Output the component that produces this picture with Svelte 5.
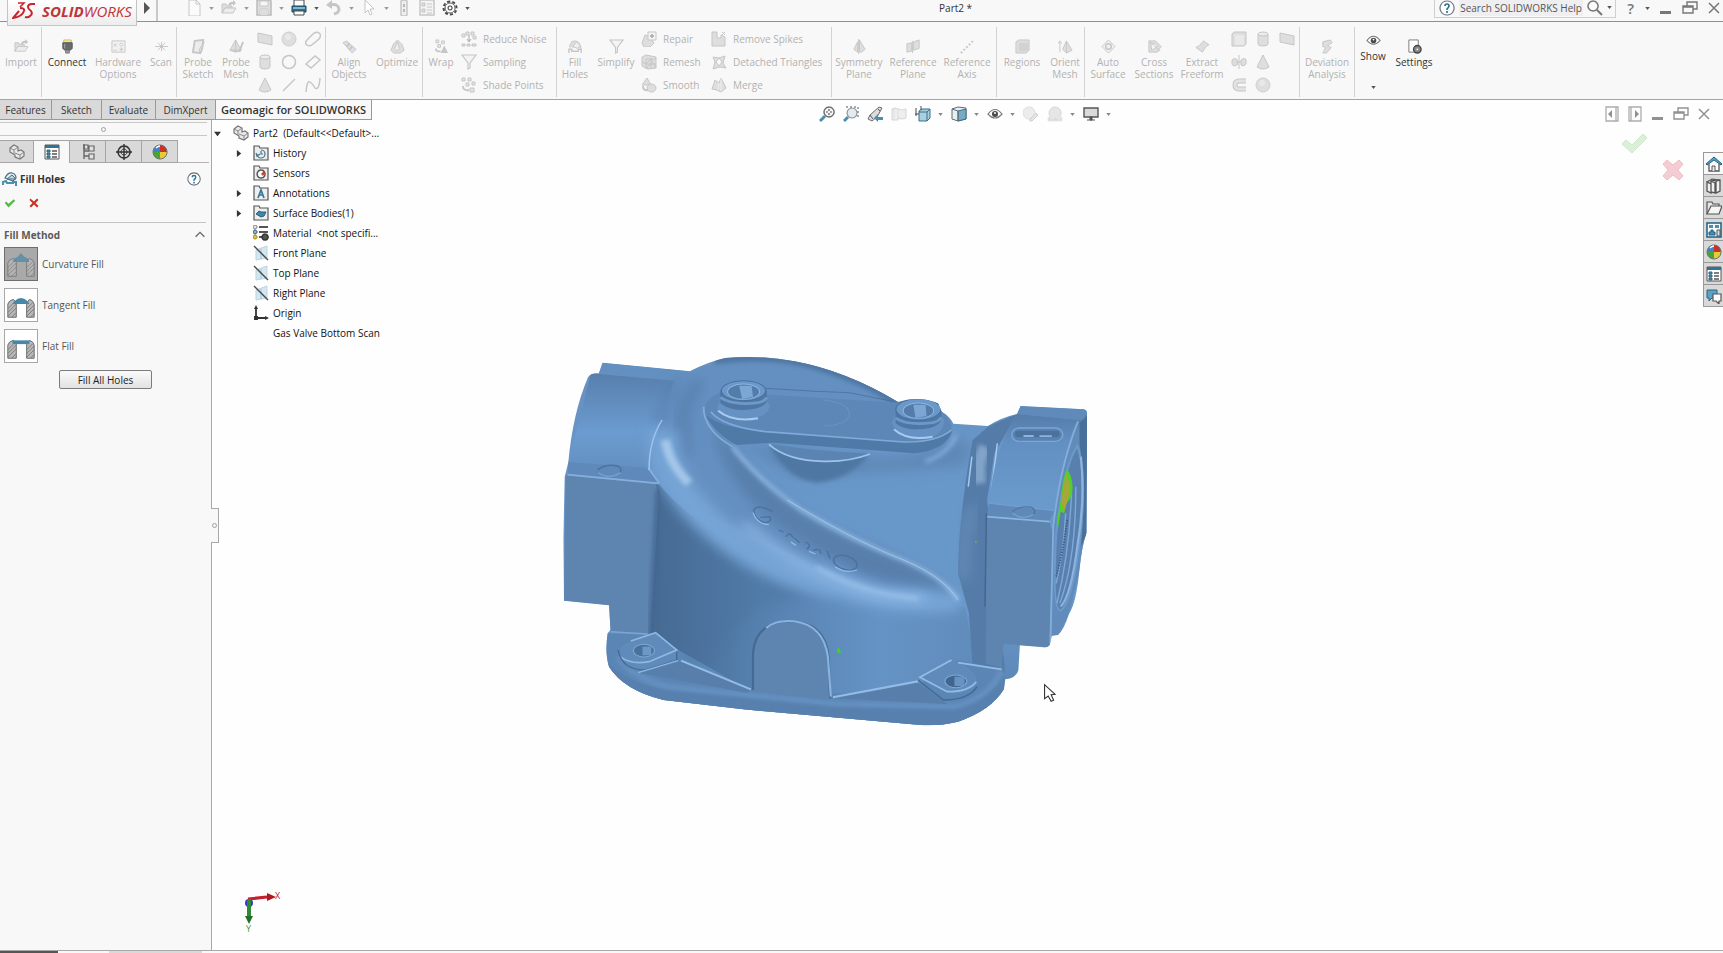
<script>
  // Each icon is a list of [path, fill, stroke, stroke width] on a 16x16 grid
  const G = '#dedede';
  const L = '#c6c6c6';
  const D = '#4a4a4a';
  const B = '#4b8fb0';

  const icons = {
    importFile: [['M1 13V4h4l1 2h5v2H4z', G, L], ['M1 13L4 8h11l-3 5z', '#ececec', L], ['M7 5q2-4 5-3l0-2 3 3-3 3V4q-2 0-3 2', L]],
    connect: [['M4 1h8v3H4z', '#f2e987', '#c9c06a'], ['M3 4h10v6l-2 2H5l-2-2z', '#6a6a6e', '#55555a'], ['M6 12h4v3H6z', '#9a9a9a', '#777'], ['M5 5v5', 'none', '#aaa']],
    hardware: [['M1 2h14v12H1z', '#f1f1f1', L], ['M3 5l3 3M6 5L3 8M11 4l2 2-2 2-2-2zM3 12h3M11 9v4M9 11h4', 'none', L]],
    scan: [['M1 8h14M8 3v10M4 4l8 8M12 4l-8 8', 'none', L], ['M6 8a2 2 0 1 0 4 0a2 2 0 1 0-4 0', L]],
    probeSketch: [['M4 2l9-1-1 9-2 5-8-1z', '#ececec', L, 2], ['M14 3l-3 9-2 3v-4z', G, L]],
    probeMesh: [['M7 1l6 11H1z', G, L], ['M7 1v11M1 12l6 2 6-2', L, L], ['M15 3l-3 8-1 3', 'none', L, 2]],
    plane: [['M1 2l14 3v9L1 11z', G, L]],
    ball: [['M1 8a7 7 0 1 0 14 0a7 7 0 1 0-14 0', G, '#cfcfcf'], ['M4 6a3 3 0 1 0 6 0a3 3 0 1 0-6 0', '#e9e9e9']],
    slot: [['M2 9l6-6q3-3 6-1t0 6l-6 5q-3 3-6 1t0-5z', 'none', L, 1.5]],
    cylinder: [['M3 3v10q0 2 5 2t5-2V3', G, L], ['M3 3q0-2 5-2t5 2q0 2-5 2T3 3z', '#ededed', L]],
    ring: [['M1.500 8a6.500 6.500 0 1 0 13 0a6.500 6.500 0 1 0-13 0', 'none', L, 1.5]],
    rect: [['M1 10l9-8 5 4-9 8z', 'none', L, 1.5]],
    cone: [['M8 1l6 12q-6 4-12 0z', G, L]],
    line: [['M2 14L14 2', 'none', L, 1.5]],
    spline: [['M1 15Q2 3 5 5t5 6q4 3 5-10', 'none', L, 1.5]],
    align: [['M1 4l4-2 10 9-4 4z', G, L], ['M5 8l3-3M8 11l3-3', 'none', L, 2]],
    optimize: [['M8 1l5 5 2 6-4 3H4l-3-3 3-7z', G, L], ['M8 3l2 7-2 3-3-3z', '#efefef', L]],
    wrap: [['M2 1h3v3H2zM8 2h3v3H8zM4 6h3v3H4z', '#e8e8e8', L], ['M11 7l4 8H7z', L], ['M2 10q0 4 5 3', 'none', L, 2]],
    noise: [['M1 3h3v3H1zM5 1h3v3H5zM10 1h3v3h-3zM12 5h3v3h-3z', '#e4e4e4', L], ['M8 4v6M6 8l2 3 2-3', 'none', '#aaa'], ['M1 13h3v2H1zM6 13h3v2H6zM11 13h4v2h-4z', G, L]],
    funnel: [['M1 1h14L9 9v5l-2 1V9z', '#f4f4f4', L, 1.2]],
    shade: [['M1 1h3v3H1zM7 1h3v3H7zM11 5h3v3h-3zM5 6h3v3H5zM9 11h4v4H9z', '#e4e4e4', L], ['M2 9q0 5 6 4', 'none', L, 2]],
    fillHoles: [['M2 9q-1-3 1-4 0-3 4-3 5 0 6 5l1 3', G, L], ['M5 8l4-5 4 4-3 3z', '#efefef', L], ['M1 15v-4h3v2h7v-2h3v4', 'none', L, 1.5]],
    repair: [['M1 12l3-8 5 2 4 6-4 4H3z', G, L], ['M7 1h8v8H7z', '#f4f4f4', L], ['M11 3v4M9 5h4', 'none', '#aaa', 1.5]],
    remesh: [['M1 3l4-2 10 2v11l-8 1-6-3z', G, L], ['M5 5h10M5 5v10M5 10h10M10 4v11M5 10l5-5 5 9M5 15l5-6M1 8l4 2', 'none', L]],
    smooth: [['M6 1l4 7H1z', G, L], ['M6 11a4.500 4 0 1 0 9 0a4.500 4 0 1 0-9 0', G, L], ['M2 9q0 5 5 4', 'none', L, 2]],
    spikes: [['M1 1h5v6h4V4l4 2v9H1z', G, L], ['M11 1l3 3M14 1l-3 3', 'none', L]],
    detached: [['M2 3l6 1 6-2-2 7 3 5-6-1-7 2 2-7z', G, L], ['M5 8l3-4 3 4-3 4z', '#fafafa', L]],
    merge: [['M4 3l4 3 2-5 5 10-5 4-4-2-5-1z', G, L], ['M8 6l-1 7M10 1v13', 'none', '#efefef']],
    symmetry: [['M8 1l6 10-4 3H8zM6 3v11l-4-3z', G, L], ['M7 0v16', 'none', L]],
    refPlane: [['M1 5l5-1v9l-5 1zM8 3l6-2v9l-6 2z', G, L], ['M7 2v13', 'none', L]],
    refAxis: [['M1 15L15 1', 'none', L, 2, '2 2']],
    regions: [['M1 3l3-2h11v11l-3 3H1z', G, L], ['M4 4h10v9H4z', '#d2d2d2']],
    orient: [['M9 2l6 10-6 3-4-4z', G, L], ['M2 14V3M0 5l2-3 2 3M9 3v12', 'none', L]],
    autoSurface: [['M8 1l7 7-7 7-7-7z', '#f0f0f0', L], ['M5 8a3 3 0 1 0 6 0a3 3 0 1 0-6 0', 'none', L, 1.5]],
    crossSections: [['M2 2h7l6 6-4 6H2z', G, L], ['M4 5h5l2 3-6 4z', '#f7f7f7', L], ['M2 2l12 11', 'none', L]],
    freeform: [['M1 9q4-1 8-7l6 4q-4 1-7 8z', G, L]],
    box: [['M1 3l2-2h12v12l-2 2H1z', G, L], ['M4 4h9v10H4z', '#e9e9e9']],
    revolve: [['M1 6q4-3 5 0 2 2 0 5-4 2-5-1zM10 6q4-3 5 0v4q-2 3-5 1z', G, L], ['M8 1v14M5 8h6', 'none', L]],
    sweep: [['M15 4H8Q4 4 4 8t4 4h7', 'none', L, 5], ['M15 4H8Q4 4 4 8t4 4h7', 'none', '#e2e2e2', 3]],
    deviation: [['M3 3l8-2 2 3-5 3 4 2-5 6H3l3-6-3-1z', G, L]],
    eye: [['M1 8q7-9 14 0-7 8-14 0z', '#fff', '#777', 1.2], ['M5 8a3 3 0 1 0 6 0a3 3 0 1 0-6 0', D], ['M7 7a1 1 0 1 0 2 0a1 1 0 1 0-2 0', '#fff']],
    settings: [['M2 1h10v13H2z', '#fff', '#777'], ['M7 11a4 4 0 1 0 8 0a4 4 0 1 0-8 0', '#8a8a8a', '#444', 1.5], ['M10 11a1 1 0 1 0 2 0a1 1 0 1 0-2 0', '#fff']],
    newFile: [['M3 0h7l4 4v12H3z', '#fbfbfb', L], ['M10 0v4h4', 'none', L]],
    save: [['M1 0h13l1 1v14H1z', G, '#bbb', 1.5], ['M4 1h8v5H4zM4 9h8v6H4z', '#f6f6f6', L], ['M5 11h6M5 13h6', 'none', L]],
    print: [['M3 6V0h10v6', '#fff', D], ['M1 6h14v6H1z', '#2f6f8c', '#1d4a60'], ['M2 8h12', 'none', '#9fd0e6', 1.5], ['M3 11h10v4H3z', '#fff', D]],
    undo: [['M4 5q8-2 9 4 0 4-5 5', 'none', L, 3], ['M0 5l6-5v9z', L]],
    pointer: [['M4 0v13l3-3 2 5 2-1-2-5h4z', '#fff', L]],
    light: [['M5 1q3-2 6 0v14q-3 2-6 0z', '#eee', L, 1.5], ['M7 4h2v3H7zM7 9h2v3H7z', '#bbb']],
    list: [['M1 0h14v15H1z', '#f4f4f4', L, 1.5], ['M3 3h3v3H3zM3 9h3v3H3z', G, L], ['M8 4h5M8 7h5M8 10h5M8 13h5', 'none', L]],
    gear: [['M8 1.500a6.500 6.500 0 1 0 .1 0', '#fff', D, 2, '3 2'], ['M8 3a5 5 0 1 0 .1 0', '#fff', D, 1], ['M8 6a2 2 0 1 0 .1 0', '#fff', D, 1.2]],
    help: [['M8 1a7 7 0 1 0 .1 0', '#fff', '#6a7780', 1.2], ['M6 6q0-2 2-2t2 2q0 1-2 3v1M8 11v2', 'none', '#2f7396', 1.7]],
    search: [['M6 1a5 5 0 1 0 .1 0', '#fbfbfb', '#777', 1.5], ['M10 10l5 5', 'none', '#777', 2]],
    min: [['M2 11h11v3H2z', '#777']],
    restore: [['M5 6V2h10v7h-4', 'none', '#777', 1.4], ['M1 6h10v7H1zM1 7h10', 'none', '#777', 1.4]],
    close: [['M3 3l10 10M13 3L3 13', 'none', '#777', 1.5]],
    dockLeft: [['M2 1h12v14H2zM12 1v14', 'none', '#999', 1.3], ['M4 8l4-4v8z', '#777']],
    dockRight: [['M2 1h12v14H2zM4 1v14', 'none', '#999', 1.3], ['M12 8L8 4v8z', '#777']],
    zoomFit: [['M6 10l-5 5', 'none', B, 3], ['M10 1a5 5 0 1 0 .1 0', '#f4f6f8', '#6b6b6b', 1.4], ['M10 3v6M7 6h6', 'none', '#555', 1.2, '2 2']],
    zoomArea: [['M5 11l-4 4', 'none', B, 3], ['M3 1h12v11', 'none', '#555', 1, '2 2'], ['M9 2a5 5 0 1 0 .1 0', '#e4ebf0', '#8b9298', 1.2]],
    prevView: [['M1 13l2-4 9-8 3 1-5 9-5 4z', '#dcdcdc', '#6b6b6b'], ['M3 9l3 4M11 3l2 2', 'none', '#555'], ['M7 12l4-4v3h5v3h-5v2z', B]],
    section: [['M1 3q3-2 6 0t8 0v9q-5 2-8 0v2H1z', '#eee', '#d5d5d5'], ['M7 3v10M3 3v9', 'none', '#ddd']],
    viewOrient: [['M4 5l3-2h8v9l-3 3H4z', '#a9cfe2', '#3d6f88'], ['M4 6h8v9M12 6l3-3', 'none', '#3d6f88'], ['M1 2v8M6 0v4M0 8h4', 'none', D]],
    display: [['M1 3l6-2 8 1v11l-8 2-6-2z', '#e9eef0', '#5f6c73'], ['M7 5l8-2v10l-8 2z', '#76aac5', '#3d6f88'], ['M1 3l6 2v10', 'none', '#5f6c73']],
    appear: [['M6 1a6 6 0 1 0 .1 0', '#ececec', '#ddd'], ['M13 7l2 2-6 6H7v-2z', '#e4e4e4', '#cfcfcf']],
    sceneIcon: [['M8 1a6 6 0 1 0 .1 0', '#e6e6e6', '#d6d6d6'], ['M1 11h3v2h3v-2h3v2h3v-2h2v4H1z', '#dadada', '#e8e8e8']],
    monitor: [['M1 2h14v9H1z', '#d8dadd', '#555', 1.4], ['M7 11h2v3H7zM4 14h8', '#555', '#555']],
    part: [['M1 4l4-3 4 2v4l3-1 3 2v4l-4 3-5-2v-2l-5-3z', '#e8e8e8', '#777', 1.2], ['M1 4l4 2 4-3M5 6v5M6 9l5 2 4-3M11 11v4', 'none', '#888']],
    props: [['M1 1h14v14H1z', '#fff', '#555'], ['M1 1h14v3H1z', '#2f7396'], ['M3 6h3v2H3zM3 9h3v2H3zM3 12h3v2H3z', B, '#35647c'], ['M8 7h5M8 10h5M8 13h5', 'none', '#555', 1.3]],
    config: [['M4 1h4v4H4zM9 2h5v5H9zM9 10h5v5H9z', '#e1e1e1', '#666', 1.2], ['M4 0v15M4 12h5M4 7h5', 'none', '#666', 1.4]],
    target: [['M8 2a6 6 0 1 0 .1 0', 'none', '#333', 1.4], ['M8 5a3 3 0 1 0 .1 0', 'none', '#333'], ['M8 0v16M0 8h16', 'none', '#333', 1.4]],
    beach: [['M8 8L8 1A7 7 0 0 0 1 8z', '#4282c9'], ['M8 8V1a7 7 0 0 1 7 7z', '#c93226'], ['M8 8H1a7 7 0 0 0 7 7z', '#46a636'], ['M8 8v7a7 7 0 0 0 7-7z', '#e6cb36'], ['M8 1a7 7 0 1 0 .1 0', 'none', '#6d6d6d'], ['M4 4q2-2 4-2', 'none', '#fff', 1.5]],
    fillTitle: [['M3 7q3-6 7-5 4 1 4 5l-3 3z', '#e3edf2', '#4c6f82', 1.2], ['M5 8l5-4 4 4z', '#b9d5e2', '#4c6f82'], ['M1 14v-3l3-1 1 2h6v-1h3v4', 'none', B, 2]],
    check: [['M1 8l2-2 3 3 7-6 2 2-9 9z', '#57b947']],
    cross: [['M3 2l5 4 4-4 2 2-4 4 4 4-2 2-4-4-4 4-2-2 4-4-4-4z', '#cf2f1f']],
    chevron: [['M3 10l5-5 5 5', 'none', '#666', 1.5]],
    history: [['M1 3V1h5l1 2h8v12H1z', '#e9edef', '#555', 1.2], ['M8 5a4 4 0 1 1-4 4', 'none', '#47748c', 1.2], ['M8 6v3h2M3 8l1 3 3-2', 'none', '#47748c', 1.2]],
    sensors: [['M1 3V1h5l1 2h8v12H1z', '#eee', '#555', 1.2], ['M8 5a4 4 0 1 0 .1 0', '#fff', '#555', 1.5], ['M8 9l3-3 1 2-2 3z', '#d63d24']],
    annotations: [['M1 3V1h5l1 2h8v12H1z', '#eee', '#555', 1.2], ['M5 13l3-8 3 8M6 10h4', 'none', '#34789a', 1.7]],
    surface: [['M1 3V1h5l1 2h8v12H1z', '#eee', '#555', 1.2], ['M3 9l3-3 2 1 5 0-2 4-3 1z', '#3f86a8', '#2a5f7a']],
    material: [['M6 2h9M6 7h9M6 12h9', 'none', '#555', 2], ['M2 0a2 2 0 1 0 .1 0', '#e5e5e5', '#777'], ['M2 5a2 2 0 1 0 .1 0', '#7fb8d4', '#457'], ['M2 10a2 2 0 1 0 .1 0', '#efc02c', '#a8861a'], ['M12 9a3 3 0 1 0 .1 0', '#555', '#333', 1.5]],
    planeItem: [['M3 5l11-4v12L3 15z', '#d3e7f0', '#bcd5e0'], ['M8 4v10', 'none', '#a4c6d6'], ['M1 1l14 14', 'none', D, 1.4]],
    origin: [['M3 2v11h11', 'none', '#333', 1.8], ['M3 0l2 4H1zM16 13l-4-2v4z', '#333'], ['M1 11h4v4H1z', '#333']],
    home: [['M3 8v7h10V8', '#fff', '#555', 1.3], ['M6 15v-5h3v5', '#eee', '#555'], ['M0 8l8-7 8 7-1 1-7-5-7 5z', '#5aa3c4', '#1f5f80']],
    library: [['M1 4l4 2v9l-4-2zM5 3l4 2v10l-4-1zM10 3l4-1v11l-4 2z', '#f1f1f1', '#555', 1.3], ['M1 4l5-3 8 1M5 3l4-1M10 3l-3-1', 'none', '#555', 1.2]],
    folder: [['M1 14V2h5l1 2h6v3', '#e5e5e5', '#555', 1.2], ['M1 14l4-8h11l-3 8z', '#f5f5f5', '#555', 1.2]],
    palette: [['M1 1h14v14H1z', '#f4f8fa', '#1f5f80', 1.5], ['M3 3h4v3H3zM9 3h4v3H9z', B], ['M3 13v-3h2V8h2v2h2v3z', B, '#1f5f80'], ['M11 8h3v6h-3z', '#ddd', '#555']],
    chat: [['M1 2h10v8H6l-3 3v-3H1z', '#5aa3c4', '#2b6480'], ['M7 6h8v7h-2v3l-3-3H7z', '#fff', '#555', 1.2]]
  };

  const quickAccess = [
    { icon: 'newFile', label: 'New', off: true, caret: true },
    { icon: 'importFile', label: 'Open', off: true, caret: true },
    { icon: 'save', label: 'Save', off: true, caret: true },
    { icon: 'print', label: 'Print', caret: true },
    { icon: 'undo', label: 'Undo', off: true, caret: true },
    { icon: 'pointer', label: 'Select', off: true, caret: true },
    { icon: 'light', label: 'Rebuild', off: true },
    { icon: 'list', label: 'File properties', off: true },
    { icon: 'gear', label: 'Options', caret: true }
  ];

  const ribbon = [
    { name: 'import', items: [{ size: 'w42', icon: 'importFile', text: 'Import' }] },
    {
      name: 'capture',
      items: [
        { size: 'w50', icon: 'connect', text: 'Connect', on: true },
        { size: 'w52', icon: 'hardware', text: 'Hardware Options' },
        { size: 'w34', icon: 'scan', text: 'Scan' }
      ]
    },
    {
      name: 'probe',
      items: [
        { size: 'w42', icon: 'probeSketch', text: 'Probe Sketch' },
        { size: 'w34', icon: 'probeMesh', text: 'Probe Mesh' },
        { grid: ['plane', 'ball', 'slot', 'cylinder', 'ring', 'rect', 'cone', 'line', 'spline'] }
      ]
    },
    {
      name: 'align',
      items: [
        { size: 'w46', icon: 'align', text: 'Align Objects' },
        { size: 'w50', icon: 'optimize', text: 'Optimize' }
      ]
    },
    {
      name: 'points',
      items: [
        { size: 'w36', icon: 'wrap', text: 'Wrap' },
        { wide: true, list: [['noise', 'Reduce Noise'], ['funnel', 'Sampling'], ['shade', 'Shade Points']] }
      ]
    },
    {
      name: 'mesh',
      items: [
        { size: 'w36', icon: 'fillHoles', text: 'Fill Holes' },
        { size: 'w46', icon: 'funnel', text: 'Simplify' },
        { list: [['repair', 'Repair'], ['remesh', 'Remesh'], ['smooth', 'Smooth']] },
        { wider: true, list: [['spikes', 'Remove Spikes'], ['detached', 'Detached Triangles'], ['merge', 'Merge']] }
      ]
    },
    {
      name: 'reference',
      items: [
        { size: 'w54', icon: 'symmetry', text: 'Symmetry Plane' },
        { size: 'w54', icon: 'refPlane', text: 'Reference Plane' },
        { size: 'w54', icon: 'refAxis', text: 'Reference Axis' }
      ]
    },
    {
      name: 'regions',
      items: [
        { size: 'w50', icon: 'regions', text: 'Regions' },
        { size: 'w36', icon: 'orient', text: 'Orient Mesh' }
      ]
    },
    {
      name: 'surface',
      items: [
        { size: 'w46', icon: 'autoSurface', text: 'Auto Surface' },
        { size: 'w46', icon: 'crossSections', text: 'Cross Sections' },
        { size: 'w50', icon: 'freeform', text: 'Extract Freeform' },
        { grid: ['box', 'cylinder', 'plane', 'revolve', 'cone', null, 'sweep', 'ball'] }
      ]
    },
    { name: 'deviation', items: [{ size: 'w54', icon: 'deviation', text: 'Deviation Analysis' }] },
    {
      name: 'view',
      items: [
        { size: 'w36', icon: 'eye', text: 'Show', on: true, menu: true },
        { size: 'w46', icon: 'settings', text: 'Settings', on: true }
      ]
    }
  ];

  const tabs = ['Features', 'Sketch', 'Evaluate', 'DimXpert', 'Geomagic for SOLIDWORKS'];
  let activeTab = $state('Geomagic for SOLIDWORKS');

  const viewTools = [
    { icon: 'zoomFit', label: 'Zoom to fit' },
    { icon: 'zoomArea', label: 'Zoom to area' },
    { icon: 'prevView', label: 'Previous view' },
    { icon: 'section', label: 'Section view' },
    { icon: 'viewOrient', label: 'View orientation', caret: true },
    { icon: 'display', label: 'Display style', caret: true },
    { icon: 'eye', label: 'Hide/show items', caret: true },
    { icon: 'appear', label: 'Edit appearance' },
    { icon: 'sceneIcon', label: 'Apply scene', caret: true },
    { icon: 'monitor', label: 'View settings', caret: true }
  ];

  const panelTabs = ['part', 'props', 'config', 'target', 'beach'];
  const fillMethods = [
    { id: 'curvature', label: 'Curvature Fill', cap: 'M8 15l2-4q4-1 7-6 3 5 7 6l2 4z' },
    { id: 'tangent', label: 'Tangent Fill', cap: 'M8 16l2-3q7-7 14 0l2 3z' },
    { id: 'flat', label: 'Flat Fill', cap: 'M8 11h18v4H8z' }
  ];
  let method = $state('curvature');

  const tree = [
    { icon: 'history', text: 'History', open: true },
    { icon: 'sensors', text: 'Sensors' },
    { icon: 'annotations', text: 'Annotations', open: true },
    { icon: 'surface', text: 'Surface Bodies(1)', open: true },
    { icon: 'material', text: 'Material\u00a0 <not specifi...' },
    { icon: 'planeItem', text: 'Front Plane' },
    { icon: 'planeItem', text: 'Top Plane' },
    { icon: 'planeItem', text: 'Right Plane' },
    { icon: 'origin', text: 'Origin' },
    { icon: null, text: 'Gas Valve Bottom Scan' }
  ];

  const taskPane = ['home', 'library', 'folder', 'palette', 'beach', 'props', 'chat'];
</script>

{#snippet icon(name)}
  <svg class="icon" viewBox="0 0 16 16" aria-hidden="true">
    {#each icons[name] as [d, fill, stroke, width, dash]}
      <path {d} {fill} stroke={stroke ?? 'none'} stroke-width={width ?? 1} stroke-dasharray={dash} />
    {/each}
  </svg>
{/snippet}

{#snippet caret()}
  <svg class="caret" viewBox="0 0 6 4" aria-hidden="true"><path d="M0 0h6L3 4z" fill="currentColor" /></svg>
{/snippet}

<div class="app">
  <header class="titlebar">
    <div class="logo">
      <svg class="ds" viewBox="0 0 24 18" aria-hidden="true">
        <path d="M6 1h6L8 5" fill="none" stroke="#c8242b" stroke-width="1.5" />
        <path d="M8 6q5 0 4 3-2 6-11 7l6-7M23 2h-3q-4 0-4 3 0 2 3 4 2 3-1 5-2 2-5 1" fill="none" stroke="#c8242b" stroke-width="2" />
      </svg>
      <span class="brand"><b>SOLID</b>WORKS</span>
    </div>
    <button class="logo-arrow" aria-label="Open menu">
      <svg viewBox="0 0 8 12"><path d="M1 0l6 6-6 6z" fill="#555" /></svg>
    </button>
    <div class="quick">
      {#each quickAccess as item}
        <button class="quick-btn" class:off={item.off} aria-label={item.label}>
          {@render icon(item.icon)}
          {#if item.caret}{@render caret()}{/if}
        </button>
      {/each}
    </div>
    <h1>Part2 *</h1>
    <div class="search">
      {@render icon('help')}
      <input type="text" aria-label="Search help" placeholder="Search SOLIDWORKS Help" />
      {@render icon('search')}
      {@render caret()}
    </div>
    <div class="window-btns">
      <button class="question">? {@render caret()}</button>
      <button aria-label="Minimize">{@render icon('min')}</button>
      <button aria-label="Restore">{@render icon('restore')}</button>
      <button aria-label="Close">{@render icon('close')}</button>
    </div>
  </header>

  <div class="ribbon">
    {#each ribbon as group}
      <div class="group {group.name}">
        {#each group.items as item}
          {#if item.grid}
            <div class="icon-grid">
              {#each item.grid as name}
                {#if name}
                  <button aria-label={name} disabled>{@render icon(name)}</button>
                {:else}
                  <span></span>
                {/if}
              {/each}
            </div>
          {:else if item.list}
            <div class="list" class:wide={item.wide} class:wider={item.wider}>
              {#each item.list as [name, text]}
                <button disabled>{@render icon(name)}{text}</button>
              {/each}
            </div>
          {:else}
            <button class="tool {item.size}" class:menu={item.menu} disabled={!item.on}>
              {@render icon(item.icon)}
              <span>{item.text}</span>
              {#if item.menu}{@render caret()}{/if}
            </button>
          {/if}
        {/each}
      </div>
    {/each}
  </div>

  <div class="tab-row">
    <nav class="tabs">
      {#each tabs as tab}
        <button class:active={tab === activeTab} onclick={() => (activeTab = tab)}>{tab}</button>
      {/each}
    </nav>
    <div class="view-tools">
      {#each viewTools as tool}
        <button aria-label={tool.label}>
          {@render icon(tool.icon)}
          {#if tool.caret}{@render caret()}{/if}
        </button>
      {/each}
    </div>
    <div class="doc-btns">
      {#each ['dockLeft', 'dockRight', 'min', 'restore', 'close'] as name}
        <button aria-label={name}>{@render icon(name)}</button>
      {/each}
    </div>
  </div>

  <main>
    <aside class="panel">
      <div class="grip"><i></i></div>
      <div class="panel-tabs">
        {#each panelTabs as name}
          <button class:active={name === 'props'} aria-label={name}>{@render icon(name)}</button>
        {/each}
      </div>
      <div class="panel-title">
        {@render icon('fillTitle')}
        <h2>Fill Holes</h2>
        <button aria-label="Help">{@render icon('help')}</button>
      </div>
      <div class="confirm">
        <button aria-label="OK">{@render icon('check')}</button>
        <button aria-label="Cancel">{@render icon('cross')}</button>
      </div>
      <section class="fill">
        <h3>Fill Method {@render icon('chevron')}</h3>
        {#each fillMethods as m}
          <label class="method">
            <input type="radio" name="fill" value={m.id} bind:group={method} />
            <svg class="thumb" viewBox="0 0 34 34" aria-hidden="true">
              <path d="M3 30V16q1-4 6-5l3 4v15zM23 30V15l3-4q4 1 5 5v14z" fill="#b9b9b9" stroke="#666" />
              <path d="M3 21l6-6M3 25l9-9M3 29l9-9M7 30l5-5M23 21l6-6M23 25l8-8M23 29l8-8M27 30l4-4" stroke="#777" />
              <path d={m.cap} fill="#4788a8" />
            </svg>
            {m.label}
          </label>
        {/each}
        <button class="fill-all">Fill All Holes</button>
      </section>
    </aside>

    <div class="viewport">
      <button class="splitter" aria-label="Collapse panel"><i></i></button>

      <ul class="tree">
        <li class="root">
          <svg class="twist" viewBox="0 0 8 8"><path d="M0 2h8L4 7z" fill="#333" /></svg>
          {@render icon('part')}
          <span>Part2&nbsp; (Default&lt;&lt;Default&gt;...</span>
        </li>
        {#each tree as node}
          <li>
            <svg class="twist" viewBox="0 0 8 8">
              {#if node.open}<path d="M1 0l5 4-5 4z" fill="#333" />{/if}
            </svg>
            {#if node.icon}{@render icon(node.icon)}{:else}<span class="blank"></span>{/if}
            <span>{node.text}</span>
          </li>
        {/each}
      </ul>

      <svg class="model" viewBox="0 0 1568 1200" preserveAspectRatio="none" role="img" aria-label="Gas valve scan">
        <defs>
          <filter id="s6" x="-30%" y="-30%" width="160%" height="160%"><feGaussianBlur stdDeviation="6" /></filter>
          <filter id="s16" x="-50%" y="-50%" width="200%" height="200%"><feGaussianBlur stdDeviation="18" /></filter>
          <filter id="s2"><feGaussianBlur stdDeviation="2" /></filter>
          <linearGradient id="body" x1="0" y1="0" x2="0" y2="1">
            <stop offset="0" stop-color="#6690bf" />
            <stop offset="0.4" stop-color="#6998cb" />
            <stop offset="0.7" stop-color="#6796c8" />
            <stop offset="1" stop-color="#527aa6" />
          </linearGradient>
          <linearGradient id="pipe" x1="0" y1="0" x2="0" y2="1">
            <stop offset="0" stop-color="#587fac" />
            <stop offset="0.6" stop-color="#6b9bd0" />
            <stop offset="1" stop-color="#6490c0" />
          </linearGradient>
          <linearGradient id="collar" x1="0" y1="0" x2="0" y2="1">
            <stop offset="0" stop-color="#557caa" />
            <stop offset="0.3" stop-color="#6390c2" />
            <stop offset="1" stop-color="#6b9bce" />
          </linearGradient>
          <linearGradient id="belly" x1="0" y1="0" x2="1" y2="0">
            <stop offset="0" stop-color="#45688f" />
            <stop offset="0.3" stop-color="#547eac" />
            <stop offset="0.7" stop-color="#6593c5" />
            <stop offset="1" stop-color="#608cbb" />
          </linearGradient>
          <clipPath id="outline">
            <path d="M172 68L412 94Q460 66 510 54Q600 44 700 64Q840 92 985 186Q1040 166 1095 190L1105 215Q1130 232 1137 251L1232 258Q1270 232 1312 222L1322 198L1495 208Q1505 210 1505 222L1503 580Q1490 620 1484 690Q1475 790 1455 822Q1442 868 1425 885L1408 887L1402 915Q1396 924 1385 922L1320 916L1316 990Q1310 1015 1280 1018L1276 1048Q1240 1112 1150 1145Q1090 1160 1040 1154L560 1108L340 1080Q230 1050 190 980Q178 940 186 880L194 870L190 796L66 782L64 600L68 410L78 366Q90 220 132 112Q140 98 162 100z" />
          </clipPath>
        </defs>
        <g clip-path="url(#outline)">
          <path d="M0 0H1568V1200H0z" fill="url(#body)" />
          <path d="M172 68L412 94L370 122L162 100z" fill="#6390c0" />
          <path d="M140 100L370 122L345 230Q310 290 300 390L78 366z" fill="url(#pipe)" />
          <!-- upper dome -->
          <path d="M370 120Q520 30 700 64Q860 96 985 186L480 160Q440 260 620 440L800 700L420 500Q300 400 330 250z" fill="#6490c1" />
          <path d="M480 60Q600 40 720 66Q880 110 990 190" fill="none" stroke="#4f76a3" stroke-width="26" filter="url(#s6)" />
          <path d="M440 120Q370 210 400 350" fill="none" stroke="#5a82b0" stroke-width="40" filter="url(#s16)" />
          <path d="M370 120Q350 190 320 250" fill="none" stroke="#5880ae" stroke-width="20" filter="url(#s16)" />
          <!-- front belly under the sweeping ridge -->
          <path d="M318 420Q420 560 600 640Q800 760 1000 810L1170 800L1200 990L1000 1060L590 1060L300 880z" fill="url(#belly)" />
          <path d="M320 480L500 600L760 760L600 800L420 1000L300 880z" fill="#4a709b" opacity="0.35" filter="url(#s16)" />
          <path d="M340 270Q330 420 480 560Q640 710 840 740Q1040 800 1150 770" fill="none" stroke="#76a4d6" stroke-width="80" filter="url(#s16)" />
          <path d="M345 300Q355 370 410 430" fill="none" stroke="#b4d2f0" stroke-width="26" opacity="0.75" filter="url(#s6)" />
          <path d="M560 550Q690 670 840 730Q940 780 1060 770" fill="none" stroke="#94bde8" stroke-width="20" filter="url(#s16)" />
          <path d="M760 680Q880 760 1040 775" fill="none" stroke="#a2c7ee" stroke-width="12" opacity="0.7" filter="url(#s6)" />
          <!-- throat between ridge and plate -->
          <path d="M470 260Q540 340 620 430Q760 560 940 630Q1100 700 1150 770Q1100 740 960 730Q820 690 700 590Q520 470 470 260z" fill="#587fac" filter="url(#s16)" />
          <path d="M560 320Q700 440 820 530Q1000 630 1160 740L1150 260L900 260z" fill="#6897c9" filter="url(#s6)" />
          <path d="M530 320Q600 420 720 510Q860 600 1000 660Q1110 710 1150 780" fill="none" stroke="#9cc3eb" stroke-width="12" opacity="0.75" filter="url(#s6)" />
          <path d="M680 480Q860 600 1000 660Q1110 710 1150 780" fill="none" stroke="#a8ccf0" stroke-width="3" opacity="0.7" filter="url(#s2)" />
          <path d="M540 310Q720 330 900 350Q1060 360 1140 290L1190 320L1160 380Q900 400 700 410z" fill="#5e88b7" filter="url(#s16)" />
          <!-- mounting plate and bosses -->
          <path d="M452 220Q450 175 500 155L985 188L1105 210Q1140 245 1130 280Q1080 310 1000 310L620 278Q480 260 452 220z" fill="#5d87b7" />
          <path d="M452 220Q480 280 540 315L640 308L1030 340Q1120 330 1135 270Q1090 310 1000 306L620 276Q480 260 452 220z" fill="#507aa8" filter="url(#s2)" />
          <path d="M470 215Q500 258 620 275L1000 306Q1090 308 1132 270" fill="none" stroke="#7faad8" stroke-width="5" filter="url(#s2)" />
          <path d="M450 200Q450 270 530 320" fill="none" stroke="#90b9e4" stroke-width="5" opacity="0.7" filter="url(#s2)" />
          <path d="M620 145L760 154L850 158L970 184" fill="none" stroke="#456a94" stroke-width="2" />
          <path d="M780 180Q860 190 850 230Q836 256 780 258" fill="none" stroke="#6793c4" stroke-width="3" />
          <path d="M488 205Q500 240 570 238Q630 232 632 195L612 168H500z" fill="#6692c3" />
          <path d="M496 150V190Q520 212 560 210Q614 208 624 185V150z" fill="#4f77a4" />
          <path d="M496 172Q530 198 600 188Q618 184 624 172" fill="none" stroke="#6d99ca" stroke-width="8" filter="url(#s2)" />
          <ellipse cx="560" cy="152" rx="61" ry="30" fill="#6b98ca" stroke="#4a709a" stroke-width="3" />
          <ellipse cx="560" cy="155" rx="44" ry="23" fill="#547ca9" stroke="#8ab3df" stroke-width="3" />
          <path d="M548 137h34l4 34-30 6z" fill="#7ba6d4" filter="url(#s2)" />
          <path d="M490 212Q530 248 600 235" fill="none" stroke="#a9cbee" stroke-width="6" filter="url(#s2)" />
          <path d="M968 250Q990 300 1050 298Q1110 292 1112 240L1095 218H980z" fill="#6692c3" />
          <path d="M978 210V250Q1000 270 1040 268Q1094 266 1104 240V210z" fill="#4f77a4" />
          <path d="M978 234Q1010 258 1080 248Q1098 244 1104 232" fill="none" stroke="#6d99ca" stroke-width="8" filter="url(#s2)" />
          <ellipse cx="1041" cy="208" rx="62" ry="32" fill="#6b98ca" stroke="#4a709a" stroke-width="3" />
          <ellipse cx="1041" cy="212" rx="42" ry="23" fill="#547ca9" stroke="#8ab3df" stroke-width="3" />
          <path d="M1027 194h34l2 34-30 6z" fill="#7ba6d4" filter="url(#s2)" />
          <path d="M974 268Q1010 304 1080 290" fill="none" stroke="#a9cbee" stroke-width="6" filter="url(#s2)" />
          <path d="M1145 285Q1125 340 1060 365" fill="none" stroke="#85afdc" stroke-width="10" filter="url(#s6)" />
          <!-- crescent lug -->
          <path d="M630 315Q680 420 760 428Q850 420 905 345Q760 350 630 315z" fill="#4f77a3" filter="url(#s6)" />
          <path d="M630 313Q760 334 908 342Q850 366 780 364Q680 362 630 313z" fill="#5b84b2" />
          <path d="M630 313Q680 362 780 364Q850 366 908 342" fill="none" stroke="#9cc3eb" stroke-width="5" filter="url(#s2)" />
          <!-- left flange -->
          <path d="M78 366L298 384L328 430L76 406z" fill="#5f89b8" />
          <path d="M70 406L318 432L326 470L304 885L190 872L190 796L66 782z" fill="#5d85b0" />
          <path d="M76 404L326 430M298 384L328 430" fill="none" stroke="#86afdb" stroke-width="5" filter="url(#s2)" />
          <path d="M300 390Q300 300 336 240" fill="none" stroke="#a0c5ea" stroke-width="4" filter="url(#s2)" />
          <path d="M158 390Q180 370 215 378Q230 390 215 404" fill="none" stroke="#4c729c" stroke-width="4" filter="url(#s2)" />
          <path d="M160 398Q190 420 222 398" fill="none" stroke="#769fce" stroke-width="4" filter="url(#s2)" />
          <path d="M324 450L304 885" stroke="#436690" stroke-width="12" filter="url(#s6)" />
          <!-- right neck and flange -->
          <path d="M1190 300Q1150 540 1150 700L1180 820L1190 980L1280 1000L1230 480L1250 340L1312 222L1235 258z" fill="#557ca8" filter="url(#s2)" />
          <path d="M1190 500Q1160 600 1166 720" stroke="#668fbd" stroke-width="24" fill="none" filter="url(#s16)" />
          <path d="M1224 320Q1200 370 1210 430" fill="none" stroke="#9ab9dc" stroke-width="34" opacity="0.65" filter="url(#s6)" />
          <path d="M1188 350L1178 440M1258 310L1242 450" fill="none" stroke="#a9cbed" stroke-width="4" filter="url(#s2)" />
          <path d="M1312 222L1492 240L1440 370L1406 515L1236 490Q1248 330 1312 222z" fill="url(#collar)" />
          <path d="M1322 198L1505 208V250L1490 240L1312 222z" fill="#5f8aba" />
          <path d="M1236 490L1415 512L1400 545L1228 530z" fill="#5f89b8" />
          <path d="M1228 530L1402 545L1410 580L1402 922L1275 912L1270 985L1226 970z" fill="#5d85b0" />
          <path d="M1228 530L1402 545" fill="none" stroke="#8bb5e1" stroke-width="5" filter="url(#s2)" />
          <path d="M1236 490L1415 512" fill="none" stroke="#769fcd" stroke-width="3" />
          <path d="M1228 520L1224 800" fill="none" stroke="#43668e" stroke-width="4" />
          <path d="M1300 515Q1320 496 1352 502Q1370 514 1352 530" fill="none" stroke="#50779f" stroke-width="4" filter="url(#s2)" />
          <path d="M1300 520Q1326 542 1358 524" fill="none" stroke="#769fce" stroke-width="4" filter="url(#s2)" />
          <rect x="1298" y="264" width="140" height="40" rx="20" fill="#5a83b2" stroke="#7ba5d3" stroke-width="4" />
          <rect x="1306" y="272" width="124" height="20" rx="10" fill="#4c729d" filter="url(#s2)" />
          <path d="M1330 288h28M1374 290h34" fill="none" stroke="#8bb4e0" stroke-width="8" filter="url(#s2)" />
          <!-- bore opening -->
          <path d="M1492 240L1505 250L1503 580L1484 690L1455 822L1425 885L1408 887L1410 580Q1430 360 1492 240z" fill="#608bba" />
          <path d="M1484 250L1505 225V580L1488 620Q1504 440 1484 310z" fill="#4a709b" filter="url(#s2)" />
          <path d="M1478 318Q1506 400 1484 610Q1462 790 1432 812Q1408 810 1420 580Q1440 380 1478 318z" fill="#587fad" stroke="#6c99c9" stroke-width="6" />
          <path d="M1488 350Q1500 480 1478 620Q1460 770 1432 800" fill="none" stroke="#8db4de" stroke-width="6" filter="url(#s2)" />
          <path d="M1462 460Q1456 640 1422 790M1474 440Q1474 660 1430 790M1446 520Q1440 640 1420 730" fill="none" stroke="#7ea8d5" stroke-width="4" />
          <path d="M1450 540Q1438 640 1420 710" fill="none" stroke="#3b5c84" stroke-width="5" stroke-dasharray="4 4" />
          <path d="M1450 388Q1466 410 1465 450Q1462 475 1448 490L1442 520L1432 515L1426 562L1422 545L1434 470Q1438 410 1450 388z" fill="#4fd12b" />
          <path d="M1449 400Q1462 440 1454 470L1442 515L1434 490Q1438 440 1449 400z" fill="#a8a637" />
          <path d="M1480 244Q1432 370 1412 560L1404 910" fill="none" stroke="#84addb" stroke-width="5" filter="url(#s2)" />
          <!-- base flange -->
          <path d="M186 880L310 885L390 965L580 1050L800 1075L1040 1035L1150 960L1270 988L1280 1200H150z" fill="#5b85b5" />
          <path d="M182 960Q230 1030 360 1050L820 1098L1130 1106Q1240 1080 1278 1000V1200H150z" fill="#5780ae" />
          <path d="M215 950Q250 1010 350 1040L820 1092L1140 1100Q1230 1080 1272 990" fill="none" stroke="#6894c5" stroke-width="12" filter="url(#s6)" />
          <path d="M270 998L380 962L580 1048L570 1058z" fill="#587fac" />
          <path d="M215 950Q214 915 250 905L318 878L376 930V955L300 990Q230 1000 215 950z" fill="#5f8ab9" />
          <path d="M250 903L318 878L376 930L300 965Q250 975 220 950" fill="none" stroke="#8fb8e2" stroke-width="5" filter="url(#s2)" />
          <path d="M376 935V962L290 990Q225 990 215 930" fill="none" stroke="#456a93" stroke-width="4" filter="url(#s2)" />
          <path d="M270 998L380 962" fill="none" stroke="#8fb8e2" stroke-width="4" filter="url(#s2)" />
          <ellipse cx="286" cy="932" rx="29" ry="19" fill="#4b719b" stroke="#7ca6d3" stroke-width="3" />
          <path d="M282 920h24v26h-24z" fill="#6c97c7" filter="url(#s2)" />
          <path d="M810 1075L1040 1028L1120 1092z" fill="#587fac" />
          <path d="M806 1072L1040 1024M388 962L580 1048" fill="none" stroke="#94bce7" stroke-width="6" filter="url(#s2)" />
          <path d="M1040 1015L1132 960L1160 972Q1210 1000 1200 1035Q1175 1065 1130 1060z" fill="#5f8ab9" />
          <path d="M1132 960L1045 1012L1120 1055Q1180 1055 1200 1025M1150 968L1270 988" fill="none" stroke="#93bce6" stroke-width="5" filter="url(#s2)" />
          <path d="M1040 1020L1110 1080Q1180 1080 1202 1040" fill="none" stroke="#456a93" stroke-width="4" filter="url(#s2)" />
          <ellipse cx="1144" cy="1024" rx="30" ry="19" fill="#41658e" stroke="#80aad7" stroke-width="3" />
          <path d="M1140 1010h28v28h-28z" fill="#6893c3" filter="url(#s2)" />
          <path d="M194 875L296 882" fill="none" stroke="#7da7d3" stroke-width="4" />
          <!-- arched window -->
          <path d="M584 1055V940Q588 842 690 840Q788 842 798 950V1080z" fill="#5d85b0" />
          <path d="M586 1050V940Q592 846 688 843Q784 846 794 950L798 1075" fill="none" stroke="#456a93" stroke-width="6" filter="url(#s2)" />
          <path d="M622 864Q650 838 700 844Q780 856 792 950L800 1070" fill="none" stroke="#88b2df" stroke-width="6" filter="url(#s2)" />
          <!-- cast marks -->
          <g fill="none" stroke="#4c739e" stroke-width="4">
            <path d="M640 515Q600 490 588 510Q590 540 620 548Q640 545 632 530L606 532" />
            <path d="M656 570l14 6M676 590q12-18 20 4M700 594l14 14M730 606q20 8 4 22M752 630q22-6 20 12M790 632l8 24" />
            <ellipse cx="840" cy="668" rx="34" ry="20" transform="rotate(20 840 668)" />
          </g>
          <path d="M586 518Q596 552 630 554M812 680Q840 702 872 690M690 606l14 10M740 634l18 8" fill="none" stroke="#90b9e4" stroke-width="4" />
          <path d="M816 938l5-18 7 18z" fill="#3fd52c" />
          <path d="M1197 604h4v5h-4z" fill="#8fa83a" />
        </g>
        <path d="M1388 1034v42l10-8 8 16 7-3-7-17 11-1z" fill="#fff" stroke="#333" stroke-width="3" />
      </svg>

      <svg class="triad" viewBox="0 0 48 48" role="img" aria-label="View triad">
        <circle cx="7" cy="13" r="4" fill="#3a3ad0" />
        <path d="M6 9L25 7" stroke="#c4202c" stroke-width="3" />
        <path d="M25 3l9 4-9 4z" fill="#b01722" />
        <path d="M7 9v18" stroke="#2f8a35" stroke-width="4" />
        <path d="M3 26h8l-4 8z" fill="#236f2a" />
        <text x="33" y="9" class="axis-x">X</text>
        <text x="4" y="42" class="axis-y">Y</text>
      </svg>

      <div class="corner">
        <button aria-label="Accept"><svg class="ok" viewBox="0 0 26 20"><path d="M1 11l4-4 6 5L22 1l4 4-15 15z" fill="#dbf0d8" stroke="#cfe8cb" /></svg></button>
        <button aria-label="Discard"><svg class="no" viewBox="0 0 22 22"><path d="M5 1l6 5 6-5 4 4-5 6 5 6-4 4-6-5-6 5-4-4 5-6-5-6z" fill="#f3cdd1" stroke="#ecc0c5" /></svg></button>
      </div>

      <nav class="task-pane">
        {#each taskPane as name, i}
          <button class:active={i === 0} aria-label={name}>{@render icon(name)}</button>
        {/each}
      </nav>
    </div>
  </main>

  <footer>
    <div class="scrollers"></div>
    <button class="current">Model</button>
    <button>Motion Study 1</button>
  </footer>
</div>

<style>
  :global(body) {
    margin: 0;
    background: #f8f8f8;
  }

  .app {
    display: flex;
    flex-direction: column;
    height: 100vh;
    overflow: hidden;
    background: #f8f8f8;
    color: #333;
    font-family: 'Open Sans', 'Noto Sans', sans-serif;
    font-size: 10px;
  }

  button {
    display: flex;
    align-items: center;
    padding: 0;
    border: 0;
    background: none;
    color: inherit;
    font: inherit;
    cursor: pointer;
  }

  .icon {
    flex: none;
    display: block;
    width: 16px;
    height: 16px;
  }

  .caret {
    flex: none;
    width: 5px;
    height: 3px;
    color: #555;
  }

  /* title bar */
  .titlebar {
    flex: none;
    display: flex;
    align-items: flex-start;
    height: 21px;
    border-bottom: 1px solid #8f8f8f;
  }

  .logo {
    flex: none;
    box-sizing: border-box;
    display: flex;
    align-items: center;
    gap: 6px;
    width: 130px;
    height: 26px;
    margin-left: 7px;
    padding: 0 4px 4px;
    border: 1px solid #c4c4c4;
    border-top: 0;
    background: linear-gradient(#fff, #ededed);
    z-index: 1;
  }

  .ds {
    flex: none;
    width: 24px;
    height: 18px;
  }

  .brand {
    color: #c0343a;
    font-size: 15px;
    font-style: italic;
    line-height: 16px;
  }

  .logo-arrow {
    justify-content: center;
    width: 19px;
    height: 16px;
  }

  .logo-arrow svg {
    width: 8px;
    height: 12px;
  }

  .quick {
    display: flex;
    align-items: center;
    height: 21px;
    padding-left: 28px;
    border-left: 2px solid #c9c9c9;
  }

  .quick-btn {
    gap: 7px;
    height: 16px;
    margin-right: 7px;
    margin-bottom: 5px;
  }

  .quick-btn.off .caret {
    color: #999;
  }

  h1 {
    flex: 1;
    margin: 0;
    font-size: 10px;
    font-weight: 400;
    line-height: 17px;
    text-align: center;
  }

  .search {
    display: flex;
    align-items: center;
    gap: 4px;
    box-sizing: border-box;
    width: 182px;
    height: 18px;
    padding: 0 3px 2px 4px;
    border: 1px solid #cfcfcf;
    border-top: 0;
  }

  .search input {
    flex: 1;
    min-width: 0;
    height: 16px;
    padding: 0 1px;
    border: 0;
    background: #efeff2;
    font: inherit;
    color: #555;
  }

  .search input::placeholder {
    color: #555;
  }

  .window-btns {
    display: flex;
    align-items: center;
    gap: 8px;
    height: 16px;
    padding: 0 1px 0 11px;
  }

  .window-btns .question {
    gap: 11px;
    color: #777;
    font-size: 15px;
    font-weight: 600;
  }

  /* ribbon */
  .ribbon {
    flex: none;
    display: flex;
    box-sizing: border-box;
    height: 78px;
    padding: 5px 0 2px;
    border-bottom: 1px solid #a5a5a5;
  }

  .group {
    flex: none;
    display: flex;
    box-sizing: border-box;
    border-right: 1px solid #d2d2d2;
  }

  .group.import { width: 42px; }
  .group.capture { width: 135px; }
  .group.probe { width: 149px; }
  .group.align { width: 97px; }
  .group.points { width: 134px; }
  .group.mesh { width: 275px; }
  .group.reference { width: 165px; }
  .group.regions { width: 88px; }
  .group.surface { width: 215px; }
  .group.deviation { width: 55px; }

  .group.view {
    border-right: 0;
  }

  .tool {
    flex: none;
    flex-direction: column;
    gap: 2px;
    padding-top: 12px;
    line-height: 12px;
    text-align: center;
  }

  .tool .icon {
    width: 15px;
    height: 15px;
  }

  .tool span {
    width: min-content;
  }

  .tool.menu {
    padding-top: 6px;
  }

  .tool.menu .caret {
    margin-top: 22px;
  }

  .ribbon button:disabled {
    color: #b2b2b2;
    cursor: default;
  }

  .w34 { width: 34px; }
  .w36 { width: 36px; }
  .w42 { width: 42px; }
  .w46 { width: 46px; }
  .w50 { width: 50px; }
  .w52 { width: 52px; }
  .w54 { width: 54px; }

  .icon-grid {
    display: grid;
    grid-template-columns: repeat(3, 24px);
    grid-template-rows: repeat(3, 23px);
  }

  .icon-grid button {
    justify-content: center;
  }

  .list {
    display: grid;
    grid-template-rows: repeat(3, 23px);
    width: 70px;
  }

  .list.wide {
    width: 97px;
  }

  .list.wider {
    width: 122px;
  }

  .list button {
    gap: 6px;
    padding-left: 2px;
    white-space: nowrap;
  }

  /* command tabs and view toolbar */
  .tab-row {
    flex: none;
    display: flex;
    height: 20px;
    background: #fefefe;
    z-index: 1;
  }

  .tabs {
    display: flex;
    background: #f8f8f8;
  }

  .tabs button {
    justify-content: center;
    box-sizing: border-box;
    border-right: 1px solid #999;
    border-bottom: 1px solid #999;
    background: #d9d9d9;
    white-space: nowrap;
  }

  .tabs button:nth-child(1) { width: 52px; }
  .tabs button:nth-child(2) { width: 50px; }
  .tabs button:nth-child(3) { width: 54px; }
  .tabs button:nth-child(4) { width: 60px; }
  .tabs button:nth-child(5) { width: 156px; }

  .tabs button.active {
    background: #f8f8f8;
    font-size: 11px;
    font-weight: 600;
  }

  .view-tools {
    flex: 1;
    display: flex;
    align-items: center;
    justify-content: center;
    gap: 8px;
    height: 28px;
  }

  .view-tools button {
    gap: 7px;
  }

  .view-tools .caret {
    color: #888;
  }

  .doc-btns {
    display: flex;
    align-items: center;
    justify-content: flex-end;
    gap: 7px;
    width: 155px;
    height: 28px;
    padding-right: 11px;
  }

  .doc-btns .icon {
    opacity: 0.8;
  }

  /* property panel */
  main {
    flex: 1;
    display: flex;
    min-height: 0;
  }

  .panel {
    flex: none;
    box-sizing: border-box;
    width: 212px;
    border-right: 1px solid #a8a8a8;
  }

  .grip {
    display: flex;
    align-items: center;
    justify-content: center;
    height: 12px;
    margin: 2px 4px 4px 0;
    border-top: 1px solid #c8c8c8;
    border-bottom: 1px solid #c8c8c8;
  }

  .grip i,
  .splitter i {
    width: 3px;
    height: 3px;
    border: 1px solid #a0a0a0;
    border-radius: 50%;
  }

  .panel-tabs {
    display: flex;
    height: 23px;
    margin-right: 2px;
    background: linear-gradient(#b5b5b5, #b5b5b5) bottom / 100% 1px no-repeat;
  }

  .panel-tabs button {
    justify-content: center;
    box-sizing: border-box;
    width: 36px;
    border: 1px solid #a5a5a5;
    border-left: 0;
    background: #d9d9d9;
  }

  .panel-tabs button:first-child {
    width: 34px;
  }

  .panel-tabs button.active {
    border-bottom: 0;
    background: #f8f8f8;
  }

  .panel-title {
    display: flex;
    align-items: center;
    gap: 2px;
    height: 31px;
    padding: 0 10px 0 2px;
  }

  .panel-title button .icon {
    width: 14px;
    height: 14px;
  }

  h2 {
    flex: 1;
    margin: 0;
    font-size: 10px;
    font-weight: 700;
  }

  .confirm {
    display: flex;
    gap: 12px;
    height: 18px;
    margin: 0 5px 6px 0;
    padding: 0 0 10px 4px;
    border-bottom: 1px solid #c4c4c4;
  }

  .confirm .icon {
    width: 12px;
    height: 12px;
  }

  .fill {
    display: flex;
    flex-direction: column;
    gap: 7px;
    padding: 0 4px;
  }

  h3 {
    display: flex;
    justify-content: space-between;
    align-items: center;
    height: 11px;
    margin: 0;
    color: #5a5a5a;
    font-size: 10px;
    font-weight: 700;
  }

  h3 .icon {
    width: 14px;
    height: 14px;
  }

  .method {
    display: flex;
    align-items: center;
    gap: 4px;
    color: #555;
  }

  .method input {
    position: absolute;
    opacity: 0;
  }

  .thumb {
    box-sizing: border-box;
    width: 34px;
    height: 34px;
    border: 1px solid #a8a8a8;
    background: #fff;
  }

  .method input:checked + .thumb {
    border-color: #6e6e6e;
    background: #a9a9a9;
  }

  .method input:checked + .thumb path {
    opacity: 0.7;
  }

  .fill-all {
    align-self: center;
    justify-content: center;
    box-sizing: border-box;
    width: 93px;
    height: 19px;
    border: 1px solid #7c7c7c;
    border-radius: 2px;
    background: linear-gradient(#fafafa, #e2e2e2);
    color: #222;
  }

  /* graphics area */
  .viewport {
    position: relative;
    flex: 1;
    min-width: 0;
    background: #fefefe;
  }

  .splitter {
    position: absolute;
    top: 388px;
    left: -1px;
    justify-content: center;
    box-sizing: border-box;
    width: 8px;
    height: 35px;
    border: 1px solid #a8a8a8;
    border-left: 0;
    background: #f8f8f8;
  }

  .tree {
    margin: 0;
    padding: 3px 0 0 24px;
    list-style: none;
    color: #111;
  }

  .tree li {
    display: flex;
    align-items: center;
    gap: 4px;
    height: 20px;
    white-space: nowrap;
  }

  .tree .root {
    margin-left: -22px;
  }

  .tree .root .twist {
    margin-right: 8px;
  }

  .twist {
    flex: none;
    width: 7px;
    height: 7px;
    margin-right: 6px;
  }

  .blank {
    width: 16px;
  }

  .model {
    position: absolute;
    top: 220px;
    left: 328px;
    width: 570px;
    height: 400px;
  }

  .triad {
    position: absolute;
    left: 30px;
    bottom: 12px;
    width: 48px;
    height: 48px;
  }

  .axis-x,
  .axis-y {
    font-size: 9px;
  }

  .axis-x {
    fill: #c4202c;
  }

  .axis-y {
    fill: #3f9a3f;
  }

  .corner {
    position: absolute;
    top: 13px;
    right: 39px;
    display: flex;
    align-items: flex-start;
    gap: 15px;
  }

  .corner .ok {
    width: 26px;
    height: 20px;
  }

  .corner .no {
    width: 22px;
    height: 22px;
    margin-top: 26px;
  }

  .task-pane {
    position: absolute;
    top: 32px;
    right: 0;
    border-top: 1px solid #999;
    border-left: 1px solid #999;
  }

  .task-pane button {
    box-sizing: border-box;
    width: 19px;
    height: 22px;
    padding-left: 2px;
    border-bottom: 1px solid #999;
    background: #d9d9d9;
  }

  .task-pane button.active {
    background: #f8f8f8;
  }

  /* document tabs, mostly below the window edge */
  footer {
    flex: none;
    display: flex;
    box-sizing: border-box;
    height: 3px;
    overflow: hidden;
    border-top: 1px solid #a8a8a8;
  }

  .scrollers {
    width: 58px;
    background: #555;
  }

  footer button {
    height: 16px;
    padding: 0 11px;
    background: #d9d9d9;
    line-height: 16px;
  }

  footer .current {
    background: #f8f8f8;
  }
</style>
